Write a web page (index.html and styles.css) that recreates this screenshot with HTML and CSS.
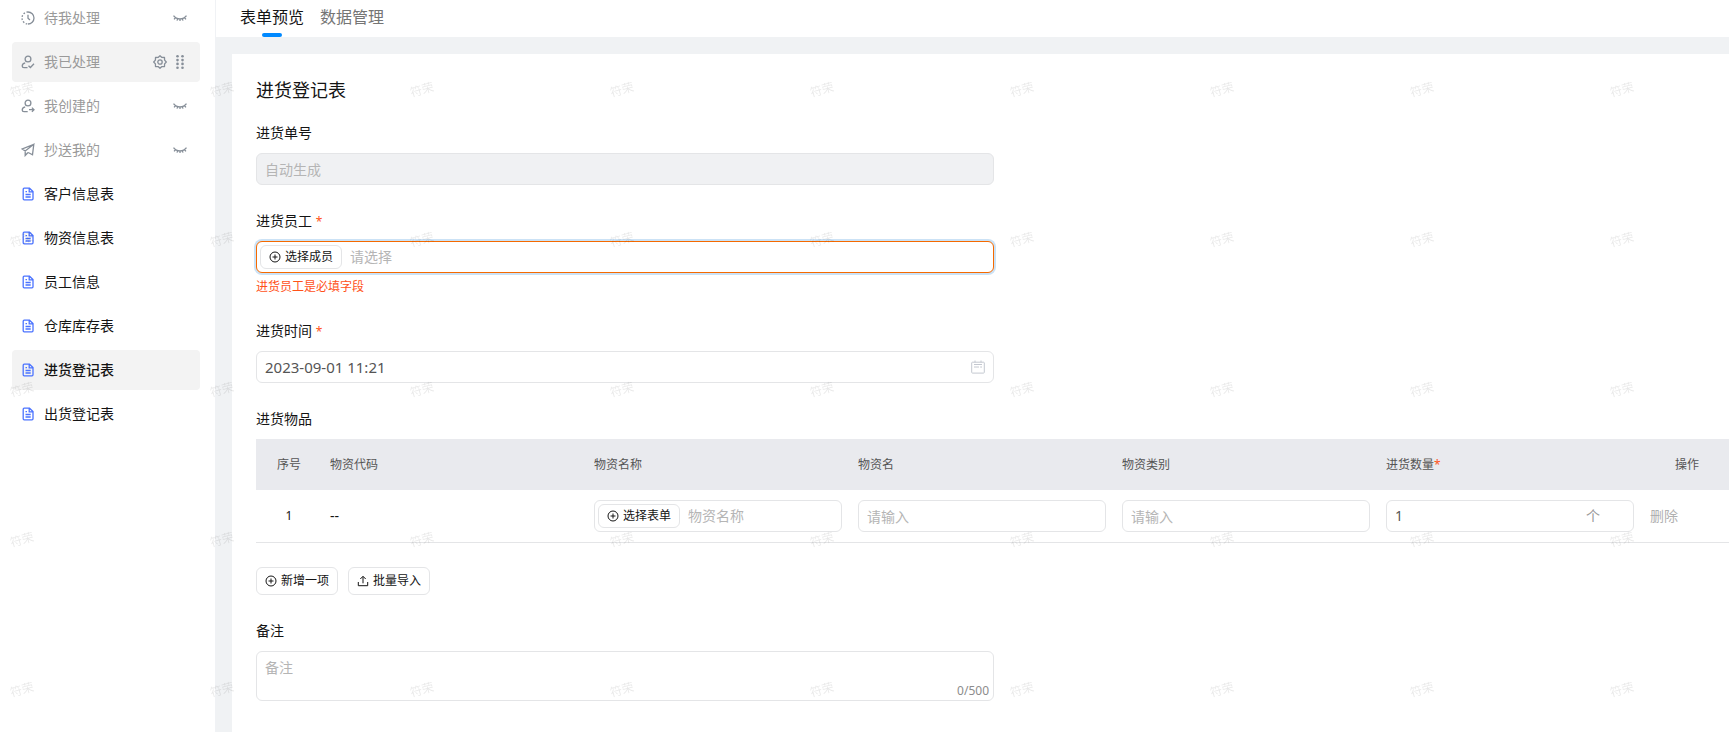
FILE: index.html
```
<!DOCTYPE html>
<html lang="zh-CN">
<head>
<meta charset="utf-8">
<title>进货登记表</title>
<link rel="stylesheet" href="styles.css">
</head>
<body>
<svg class="sprite" aria-hidden="true">
  <symbol id="clock" viewBox="0 0 14 14"><path d="M7 1a6 6 0 0 1 0 12"/><path d="M7 1a6 6 0 0 0 0 12" stroke-dasharray="1.6 1.6"/><path d="M7 3.800v3.400l2 1.800"/></symbol>
  <symbol id="user-check" viewBox="0 0 14 14"><circle cx="7" cy="4" r="2.9"/><path d="M4.200 7.800C2.400 8.200 1.200 9.400 1.200 11c0 1.200.7 1.700 1.800 1.700h3.500M7.500 10.700l1.900 1.800 3.600-3.700"/></symbol>
  <symbol id="user-plus" viewBox="0 0 14 14"><circle cx="7" cy="4" r="2.900"/><path d="M4.200 7.800C2.400 8.200 1.200 9.400 1.200 11c0 1.200.7 1.700 1.800 1.700h3.700M8 10.700h5M10.900 8.600l2.100 2.100-2.100 2.100"/></symbol>
  <symbol id="plane" viewBox="0 0 14 14"><path d="M12.800 1.300 1.200 6l3 2 8.600-6.700-1.300 10.500-4.300-2.300M4.200 8v4.500l2.800-3"/></symbol>
  <symbol id="doc" viewBox="0 0 14 14"><path d="M3.200 1.200h5.300L12 4.600v7.200c0 .7-.3 1-1 1H3.200c-.7 0-1-.3-1-1V2.200c0-.7.3-1 1-1zM8.200 1.400v3.400H12M4.500 7.500h5.200M4.500 10h5.200M4.500 4.700h1.500"/></symbol>
  <symbol id="eye-off" viewBox="0 0 14 14"><path d="M.5 4.600c3.200 4.400 9.800 4.400 13 0M2.500 6.500 1.100 8.300M4.700 7.600 4 9.600M7 8v2.100M9.300 7.600l.7 2M11.500 6.500l1.400 1.800"/></symbol>
  <symbol id="gear" viewBox="0 0 14 14"><path d="M7 .7 8.900 2.400 11.500 2.500 11.600 5.100 13.300 7 11.600 8.900 11.500 11.500 8.900 11.600 7 13.300 5.100 11.600 2.500 11.500 2.400 8.900.7 7 2.400 5.100 2.500 2.500 5.100 2.400z" stroke-linejoin="round"/><circle cx="7" cy="7" r="2.200"/></symbol>
  <symbol id="grip" viewBox="0 0 8 14"><g fill="currentColor" stroke="none"><circle cx="1.500" cy="1.300" r="1.300"/><circle cx="6.500" cy="1.300" r="1.300"/><circle cx="1.500" cy="5.100" r="1.300"/><circle cx="6.500" cy="5.100" r="1.300"/><circle cx="1.500" cy="8.900" r="1.300"/><circle cx="6.500" cy="8.900" r="1.300"/><circle cx="1.500" cy="12.700" r="1.300"/><circle cx="6.500" cy="12.700" r="1.300"/></g></symbol>
  <symbol id="plus" viewBox="0 0 12 12"><circle cx="6" cy="6" r="5"/><path d="M3.500 6h5M6 3.500v5"/></symbol>
  <symbol id="upload" viewBox="0 0 12 12"><path d="M1.300 7v3.700h9.400V7M6 8.300V1.500M3.300 4 6 1.300 8.700 4"/></symbol>
  <symbol id="calendar" viewBox="0 0 14 14"><path d="M1.500 2.200h11a.8.800 0 0 1 .8.800v9.300a.8.800 0 0 1-.8.800h-11a.8.800 0 0 1-.8-.8V3a.8.800 0 0 1 .8-.8zM4 .5v2M10 .5v2M3 4.500h8M3 7h5M9.200 7H11"/></symbol>
</svg>

<div class="app">
  <nav class="sidebar">
    <a class="item muted" href="#"><svg class="icon"><use href="#clock"/></svg><span class="name">待我处理</span><svg class="icon"><use href="#eye-off"/></svg></a>
    <a class="item muted active" href="#"><svg class="icon"><use href="#user-check"/></svg><span class="name">我已处理</span><svg class="icon"><use href="#gear"/></svg><svg class="icon grip"><use href="#grip"/></svg></a>
    <a class="item muted" href="#"><svg class="icon"><use href="#user-plus"/></svg><span class="name">我创建的</span><svg class="icon"><use href="#eye-off"/></svg></a>
    <a class="item muted" href="#"><svg class="icon"><use href="#plane"/></svg><span class="name">抄送我的</span><svg class="icon"><use href="#eye-off"/></svg></a>
    <a class="item" href="#"><svg class="icon doc"><use href="#doc"/></svg><span class="name">客户信息表</span></a>
    <a class="item" href="#"><svg class="icon doc"><use href="#doc"/></svg><span class="name">物资信息表</span></a>
    <a class="item" href="#"><svg class="icon doc"><use href="#doc"/></svg><span class="name">员工信息</span></a>
    <a class="item" href="#"><svg class="icon doc"><use href="#doc"/></svg><span class="name">仓库库存表</span></a>
    <a class="item active current" href="#"><svg class="icon doc"><use href="#doc"/></svg><span class="name">进货登记表</span></a>
    <a class="item" href="#"><svg class="icon doc"><use href="#doc"/></svg><span class="name">出货登记表</span></a>
  </nav>

  <div class="main">
    <header class="tabs">
      <a class="tab selected" href="#">表单预览</a>
      <a class="tab" href="#">数据管理</a>
    </header>
    <main class="card">
      <form class="form">
        <h1 class="title">进货登记表</h1>

        <div class="field">
          <label class="label" for="order">进货单号</label>
          <input class="input" id="order" placeholder="自动生成" disabled>
        </div>

        <div class="field">
          <label class="label" for="staff">进货员工 <span class="required">*</span></label>
          <div class="input picker invalid">
            <button class="btn small" type="button"><svg class="btn-icon"><use href="#plus"/></svg>选择成员</button>
            <input class="bare" id="staff" placeholder="请选择">
          </div>
          <p class="error">进货员工是必填字段</p>
        </div>

        <div class="field">
          <label class="label" for="time">进货时间 <span class="required">*</span></label>
          <div class="input date">
            <input class="bare" id="time" value="2023-09-01 11:21">
            <svg class="calendar"><use href="#calendar"/></svg>
          </div>
        </div>

        <div class="field wide">
          <div class="label">进货物品</div>
          <table class="table">
            <thead>
              <tr><th class="col-index">序号</th><th>物资代码</th><th>物资名称</th><th>物资名</th><th>物资类别</th><th>进货数量<span class="required">*</span></th><th class="col-action">操作</th></tr>
            </thead>
            <tbody>
              <tr>
                <td class="col-index">1</td>
                <td>--</td>
                <td><div class="input picker"><button class="btn small" type="button"><svg class="btn-icon"><use href="#plus"/></svg>选择表单</button><input class="bare" placeholder="物资名称" aria-label="物资名称"></div></td>
                <td><input class="input" placeholder="请输入" aria-label="物资名"></td>
                <td><input class="input" placeholder="请输入" aria-label="物资类别"></td>
                <td><div class="input amount"><input class="bare" value="1" aria-label="进货数量"><span class="unit">个</span></div></td>
                <td><button class="remove" type="button">删除</button></td>
              </tr>
            </tbody>
          </table>
          <div class="actions">
            <button class="btn" type="button"><svg class="btn-icon"><use href="#plus"/></svg>新增一项</button>
            <button class="btn" type="button"><svg class="btn-icon"><use href="#upload"/></svg>批量导入</button>
          </div>
        </div>

        <div class="field">
          <label class="label" for="remark">备注</label>
          <div class="remark">
            <textarea class="input" id="remark" placeholder="备注"></textarea>
            <span class="count">0/500</span>
          </div>
        </div>
      </form>
    </main>
  </div>
</div>

<div class="watermark" aria-hidden="true">
  <span>符荣</span><span>符荣</span><span>符荣</span><span>符荣</span><span>符荣</span><span>符荣</span><span>符荣</span><span>符荣</span><span>符荣</span>
  <span>符荣</span><span>符荣</span><span>符荣</span><span>符荣</span><span>符荣</span><span>符荣</span><span>符荣</span><span>符荣</span><span>符荣</span>
  <span>符荣</span><span>符荣</span><span>符荣</span><span>符荣</span><span>符荣</span><span>符荣</span><span>符荣</span><span>符荣</span><span>符荣</span>
  <span>符荣</span><span>符荣</span><span>符荣</span><span>符荣</span><span>符荣</span><span>符荣</span><span>符荣</span><span>符荣</span><span>符荣</span>
  <span>符荣</span><span>符荣</span><span>符荣</span><span>符荣</span><span>符荣</span><span>符荣</span><span>符荣</span><span>符荣</span><span>符荣</span>
</div>
</body>
</html>
```
FILE: styles.css
```
* { box-sizing: border-box; }

body {
  margin: 0;
  height: 100vh;
  overflow: hidden;
  font: 14px/20px "Noto Sans", "Noto Sans CJK SC", sans-serif;
  color: #141414;
  background: #fff;
}

input, textarea, button { font: inherit; color: inherit; }
::placeholder { color: #b5b5b5; opacity: 1; }
svg { fill: none; stroke: currentColor; }
.sprite { display: none; }

.app { display: flex; height: 100%; }

.sidebar {
  flex: 0 0 216px;
  display: flex;
  flex-direction: column;
  gap: 4px;
  margin-top: -2px;
  padding: 0 15px 0 12px;
  border-right: 1px solid #f0f2f5;
}
.item {
  display: flex;
  align-items: center;
  flex: 0 0 40px;
  padding: 0 13px 0 9px;
  border-radius: 4px;
  color: #141414;
  text-decoration: none;
}
.item.active { background: #f3f3f3; }
.item.current { font-weight: 500; }
.item.muted { color: #868e98; }
.muted .name { color: #9a9a9a; }
.name { flex: 1; margin-left: 9px; }
.icon { width: 14px; height: 14px; stroke-width: 1.3; }
.icon.doc { color: #4b73ff; }
.icon.grip { width: 8px; margin: 0 3px 0 9px; }

/* Main column */
.main {
  flex: 1;
  min-width: 0;
  display: flex;
  flex-direction: column;
  background: #f0f2f4;
}
.tabs {
  display: flex;
  gap: 16px;
  height: 37px;
  padding-left: 24px;
  background: #fff;
}
.tab {
  position: relative;
  font-size: 16px;
  line-height: 34px;
  color: #757575;
  text-decoration: none;
}
.tab.selected { color: #141414; }
.tab.selected::after {
  content: "";
  position: absolute;
  left: 50%;
  bottom: 0;
  width: 20px;
  height: 4px;
  margin-left: -10px;
  border-radius: 2px;
  background: #0089ff;
}
.card {
  flex: 1;
  margin: 17px 0 0 16px;
  padding: 24px 0 0 24px;
  background: #fff;
}
.form { margin-right: -3px; }
.title {
  margin: 0 0 21px;
  font-size: 18px;
  line-height: 24px;
  font-weight: 400;
}

/* Fields */
.field { width: 50%; margin-bottom: 26px; }
.field.wide { width: 100%; }
.label { display: block; margin-bottom: 10px; }
.required { font-size: 12px; line-height: 12px; color: #ff5219; }
.input {
  display: block;
  width: 100%;
  height: 32px;
  padding: 0 8px;
  border: 1px solid #e4e5e7;
  border-radius: 6px;
  background: #fff;
  color: #555;
  outline: 0;
}
.input:disabled { background: #f0f1f3; }
.bare {
  flex: 1;
  min-width: 0;
  width: 100%;
  padding: 0;
  border: 0;
  background: none;
  outline: 0;
}
.date .bare { font-size: 15px; }
.picker, .date, .amount { display: flex; align-items: center; }
.picker { gap: 8px; padding: 0 3px; }
.invalid { border-color: #f56a00; box-shadow: 0 0 0 2px #cbe2f6; }
.error {
  margin: 4px 0 0;
  padding-top: 2px;
  font-size: 12px;
  line-height: 16px;
  color: #ff5219;
}
.calendar { width: 14px; height: 14px; color: #c4c8d0; }
.unit { margin-right: 25px; color: #999; }

.btn {
  display: inline-flex;
  align-items: center;
  justify-content: center;
  gap: 4px;
  flex: none;
  width: 82px;
  height: 28px;
  padding: 0;
  border: 1px solid #e4e5e7;
  border-radius: 6px;
  background: #fff;
  font-size: 12px;
  color: #141414;
}
.btn.small { height: 24px; }
.btn-icon { width: 12px; height: 12px; }

/* Item table */
.table {
  width: 100%;
  table-layout: fixed;
  border-collapse: separate;
  border-spacing: 0;
}
.table th {
  height: 51px;
  padding: 0 8px;
  background: #e9eaee;
  font-size: 12px;
  font-weight: 400;
  text-align: left;
  color: #555;
}
.table td { padding: 10px 8px; border-bottom: 1px solid #e4e5e7; }
.table .col-index { width: 66px; text-align: center; }
.table td.col-index { font-size: 12px; }
.table .col-action { width: 90px; text-align: center; }
.remove { padding: 0; border: 0; background: none; color: #b0b0b0; }
.actions { display: flex; gap: 10px; margin-top: 24px; }

.remark { position: relative; }
.remark .input { height: 50px; padding: 6px 8px; resize: none; }
.count {
  position: absolute;
  right: 5px;
  bottom: 0;
  font-size: 12px;
  color: #8c8c8c;
}

/* Watermark overlay */
.watermark {
  position: fixed;
  inset: 0;
  display: grid;
  grid-template-columns: repeat(9, 200px);
  grid-auto-rows: 150px;
  padding: 80px 0 0 10px;
  overflow: hidden;
  pointer-events: none;
  font-size: 12px;
  color: rgba(0, 0, 0, 0.09);
}
.watermark span { width: 24px; height: 20px; transform: rotate(-15deg); }
```
